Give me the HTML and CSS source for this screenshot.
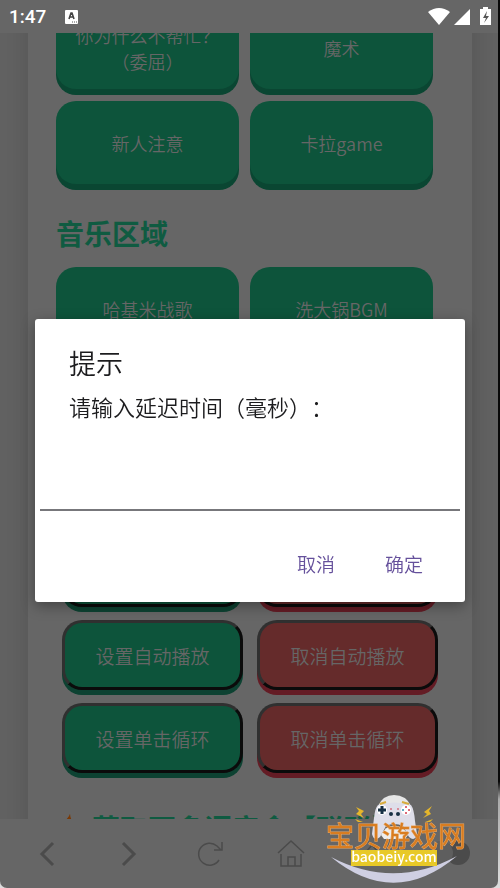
FILE: index.html
```html
<!DOCTYPE html>
<html lang="zh-CN">
<head>
    <meta charset="UTF-8">
    <meta name="viewport" content="width=device-width, initial-scale=1.0">
    <title>音乐区域</title>
    <link rel="stylesheet" href="styles.css">
</head>
<body>
<div class="screen">
    <header class="status">
        <span class="time">1:47</span>
        <svg class="input-icon" width="14" height="16" viewBox="0 0 14 16">
            <rect x="0" y="1" width="13" height="14" rx="1" fill="#fff"/>
            <path d="M4 10 L6 4 H7 L9 10 M5 8 H8" fill="none" stroke="#444" stroke-width="1.600"/>
            <path d="M7 13h1M9 13h1M11 13h1" stroke="#555"/>
        </svg>
        <svg class="signals" width="64" height="20" viewBox="0 0 64 20">
            <path d="M0 5 Q11 -3 22 5 L11 18Z" fill="#fff"/>
            <path d="M26 18 L42 2 V18Z" fill="#fff"/>
            <path d="M52 2h3V0h5v2h3v16H52Z" fill="#fff"/>
            <path d="M59 4 L55 11 H58 L56 16 L61 9 H58Z" fill="#555"/>
        </svg>
    </header>

    <main class="page">
        <div class="card">
            <div class="sounds">
                <button>你为什么不帮忙？（委屈）</button>
                <button>魔术</button>
                <button>新人注意</button>
                <button>卡拉game</button>
            </div>
            <h2>音乐区域</h2>
            <div class="sounds">
                <button>哈基米战歌</button>
                <button>洗大锅BGM</button>
            </div>
            <div class="controls">
                <button aria-label="设置循环播放"></button>
                <button class="off" aria-label="取消循环播放"></button>
                <button>设置自动播放</button>
                <button class="off">取消自动播放</button>
                <button>设置单击循环</button>
                <button class="off">取消单击循环</button>
            </div>
            <h2 class="more">
                <svg width="28" height="28" viewBox="0 0 28 28"><path d="M14 -1 C14 4 4 9 4 18 C4 24 9 27 14 27 C20 27 23 23 22 17 C21 12 14 8 14 -1Z" fill="#7a3905"/></svg>
                <span>获取更多语音盒【联联】</span>
            </h2>
        </div>
    </main>

    <nav class="toolbar">
        <button aria-label="后退"><svg viewBox="0 0 30 30"><path d="M20 4 L9 15 L20 26" stroke-width="3"/></svg></button>
        <button aria-label="前进"><svg viewBox="0 0 30 30"><path d="M9 4 L20 15 L9 26" stroke-width="3"/></svg></button>
        <button aria-label="刷新"><svg viewBox="0 0 30 30"><path d="M24 21 A11 11 0 1 1 22 7 L26 11 M27 3 V11 H19"/></svg></button>
        <button aria-label="主页"><svg viewBox="0 0 30 30"><path d="M2 14 L15 2 L28 14 M5 15 V27 H25 V15 M12 27 V18 H19 V27"/></svg></button>
        <button aria-label="菜单"><svg viewBox="0 0 30 30"><path d="M8 14 L15 6 L22 14"/></svg></button>
        <button aria-label="更多">
            <svg class="toggle" viewBox="0 0 50 30">
                <circle cx="30" cy="14" r="12" fill="#4b4b4b" stroke="none"/>
                <circle cx="13" cy="14" r="12" fill="#5e5e5e" stroke="none"/>
            </svg>
        </button>
    </nav>
</div>

<div class="overlay">
    <form class="dialog" action="#" role="dialog">
        <h1>提示</h1>
        <label for="delay">请输入延迟时间（毫秒）：</label>
        <input type="text" id="delay" name="delay">
        <div class="actions">
            <button type="button">取消</button>
            <button type="submit">确定</button>
        </div>
    </form>
</div>

<svg class="logo" width="150" height="96" viewBox="0 -4 150 96">
    <path d="M10 61 Q73 94 136 60 Q73 113 10 61Z" fill="#cfcfe2"/>
    <!-- gamepad -->
    <path d="M57 10 Q62 -1 73 -1 Q85 -1 90 10Z" fill="#e6e6e6"/>
    <path d="M57 9 Q73 4 90 9 Q93 13 94 25 L96 38 Q94 46 88 41 L82 30 Q73 26 65 30 L59 41 Q53 46 51 38 L53 22 Q54 12 57 9Z" fill="#dedee9"/>
    <path d="M60 39 Q64 30 73 30 Q83 30 87 39 L84 43 H63Z" fill="#eee"/>
    <path d="M59 8 L65 6 M81 6 L88 8" stroke="#d8ac3b" stroke-width="2"/>
    <circle cx="61" cy="14" r="5" fill="#fff"/>
    <path d="M61 10V18M57 14H65" stroke="#173044" stroke-width="3"/>
    <circle cx="85" cy="14" r="5" fill="#fff"/>
    <circle cx="85" cy="11" r="1" fill="#d33a4b"/>
    <circle cx="85" cy="17" r="1" fill="#d33a4b"/>
    <circle cx="82" cy="14" r="1" fill="#2f91ad"/>
    <circle cx="88" cy="14" r="1" fill="#d33a4b"/>
    <circle cx="70" cy="18" r="2" fill="#173044"/>
    <circle cx="77" cy="18" r="2" fill="#173044"/>
    <path d="M69 13h2M76 13h2" stroke="#d33a4b"/>
    <path d="M35 11 L43 15 L40 18 L43 22 L35 18 L38 15Z M34 23 L42 26 L37 26Z" fill="#e5b62b"/>
    <path d="M111 10 L103 16 L106 18 L102 22 L110 18 L108 15Z M112 23 L104 26 L109 26Z" fill="#e5b62b"/>
    <text class="logo-name" x="75" y="51" text-anchor="middle">宝贝游戏网</text>
    <rect x="30" y="54" width="86" height="16" fill="#e8c928"/>
    <text class="logo-url" x="73" y="66" text-anchor="middle">baobeiy.com</text>
</svg>
</body>
</html>
```

FILE: styles.css
```css
* {
    box-sizing: border-box;
}
body {
    margin: 0;
    background: linear-gradient(#080808 88%, #aaa 90%, #ddd);
    font-family: "Noto Sans CJK SC", sans-serif;
    font-weight: 350;
    color: #666;
}
button {
    font-family: inherit;
    font-weight: inherit;
    padding: 0;
}
.screen {
    height: 100vh;
    margin-right: 2px;
    display: flex;
    flex-direction: column;
    background: #666;
    border-radius: 0 0 7px 7px;
}

.status {
    height: 33px;
    flex: none;
    display: flex;
    align-items: center;
    padding: 0 6px 0 9px;
    color: #fff;
}
.time {
    font: 500 19px Roboto, sans-serif;
    width: 56px;
}
.signals {
    margin-left: auto;
}

.page {
    flex: 1;
    min-height: 0;
    overflow: hidden;
    padding: 0 26px 0 28px;
    background: #626262;
}
/* the page is scrolled a little past the first row */
.card {
    margin-top: -27px;
    background: #666;
    box-shadow: 0 0 28px rgba(0, 0, 0, .15);
}
.sounds {
    display: grid;
    grid-template-columns: 1fr 1fr;
    gap: 12px 11px;
    padding: 0 39px 6px 28px;
}
.sounds button {
    height: 83px;
    padding: 0 18px;
    border: 0;
    border-radius: 20px;
    background: #0d543b;
    box-shadow: 0 6px #0a4632;
    color: #666;
    font-size: 18px;
    line-height: 26px;
}
h2 {
    margin: 23px 28px 14px;
    font-size: 28px;
    font-weight: 700;
    line-height: 40px;
    color: #0f5b41;
}
.controls {
    display: grid;
    grid-template-columns: 1fr 1fr;
    gap: 13px 14px;
    padding: 0 34px;
    margin-top: 181px;
}
.controls button {
    height: 70px;
    border: 3px solid;
    border-color: #303030 #0b0b0b #0b0b0b #303030;
    border-radius: 20px;
    background: #0d543b;
    box-shadow: 0 5px #0d4232;
    color: #666;
    font-size: 19px;
}
.controls .off {
    background: #652b2b;
    box-shadow: 0 5px #641c25;
}
.more {
    display: flex;
    gap: 8px;
    margin-top: 35px;
    white-space: nowrap;
}
.more svg {
    flex: none;
    margin-top: 6px;
}

.toolbar {
    height: 69px;
    flex: none;
    display: grid;
    grid-template-columns: repeat(6, 1fr);
    align-items: center;
    padding: 0 5px 0 7px;
}
.toolbar button {
    border: 0;
    background: none;
    line-height: 0;
}
.toolbar svg {
    width: 30px;
    height: 30px;
    fill: none;
    stroke: #4b4b4b;
    stroke-width: 1.500;
}
.toolbar .toggle {
    width: 50px;
}

.overlay {
    position: fixed;
    inset: 0;
    display: flex;
    align-items: center;
    padding: 33px 35px 0;
}
.dialog {
    width: 100%;
    padding: 24px 5px 14px;
    border-radius: 3px;
    background: #fff;
    color: #1c1c1e;
    box-shadow: 0 4px 14px rgba(0, 0, 0, .35);
}
.dialog h1 {
    margin: 0 29px;
    font-size: 27px;
    font-weight: 350;
    line-height: 40px;
}
.dialog label {
    display: block;
    margin: 6px 29px 0;
    font-size: 22px;
    line-height: 34px;
    text-spacing-trim: space-all;
}
.dialog input {
    display: block;
    width: 100%;
    height: 88px;
    border: 0;
    border-bottom: 2px solid #77777b;
    outline: none;
    font-size: 22px;
}
.actions {
    display: flex;
    justify-content: flex-end;
    gap: 50px;
    padding: 29px 37px 0 0;
}
.actions button {
    border: 0;
    background: none;
    color: #65509b;
    font-size: 19px;
    line-height: 48px;
}

.logo {
    position: fixed;
    right: 29px;
    bottom: 0;
}
.logo-name {
    font-size: 28px;
    font-weight: 400;
    fill: #d97d20;
    stroke: #e6a868;
    stroke-width: 1px;
    paint-order: stroke;
}
.logo-url {
    font-size: 14px;
    font-weight: 500;
    fill: #fff;
}
```
